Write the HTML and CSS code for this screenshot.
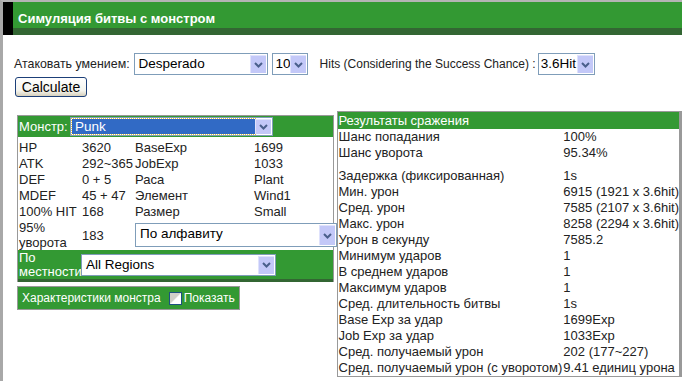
FILE: index.html
```html
<!DOCTYPE html>
<html lang="ru">
<head>
    <meta charset="UTF-8">
    <title>Симуляция битвы с монстром</title>
    <link rel="stylesheet" href="styles.css">
</head>
<body>
    <div class="frame">
        <div class="header">
            <div class="mark"></div>
            <h1>Симуляция битвы с монстром</h1>
        </div>

        <div class="controls">
            <div class="line">
                <span class="lbl">Атаковать умением:</span>
                <span class="sel skill"><span class="val">Desperado</span><span class="arr"><svg width="9" height="6" viewBox="0 0 9 6"><path d="M1 1 L4.5 4.5 L8 1" fill="none" stroke="#4a5f8c" stroke-width="2"/></svg></span></span>
                <span class="sel lv"><span class="val">10</span><span class="arr"><svg width="9" height="6" viewBox="0 0 9 6"><path d="M1 1 L4.5 4.5 L8 1" fill="none" stroke="#4a5f8c" stroke-width="2"/></svg></span></span>
                <span class="lbl hits">Hits (Considering the Success Chance) :</span>
                <span class="sel hit"><span class="val">3.6Hit</span><span class="arr"><svg width="9" height="6" viewBox="0 0 9 6"><path d="M1 1 L4.5 4.5 L8 1" fill="none" stroke="#4a5f8c" stroke-width="2"/></svg></span></span>
            </div>
            <button class="calc">Calculate</button>
        </div>

        <div class="panels">
            <div class="left">
                <div class="monster">
                    <div class="mon-head">
                        <span>Монстр:</span>
                        <span class="sel mon focused"><span class="val">Punk</span><span class="arr"><svg width="9" height="6" viewBox="0 0 9 6"><path d="M1 1 L4.5 4.5 L8 1" fill="none" stroke="#4a5f8c" stroke-width="2"/></svg></span></span>
                    </div>
                    <table class="stats">
                        <tr><td class="c1">HP</td><td class="c2">3620</td><td class="c3">BaseExp</td><td>1699</td></tr>
                        <tr><td>ATK</td><td>292~365</td><td>JobExp</td><td>1033</td></tr>
                        <tr><td>DEF</td><td>0 + 5</td><td>Раса</td><td>Plant</td></tr>
                        <tr><td>MDEF</td><td>45 + 47</td><td>Элемент</td><td>Wind1</td></tr>
                        <tr><td>100% HIT</td><td>168</td><td>Размер</td><td>Small</td></tr>
                        <tr class="flee">
                            <td>95%<br>уворота</td>
                            <td>183</td>
                            <td colspan="2"><span class="sel sort"><span class="val">По алфавиту</span><span class="arr"><svg width="9" height="6" viewBox="0 0 9 6"><path d="M1 1 L4.5 4.5 L8 1" fill="none" stroke="#4a5f8c" stroke-width="2"/></svg></span></span></td>
                        </tr>
                    </table>
                    <div class="region">
                        <span class="region-lbl">По<br>местности</span>
                        <span class="sel reg"><span class="val">All Regions</span><span class="arr"><svg width="9" height="6" viewBox="0 0 9 6"><path d="M1 1 L4.5 4.5 L8 1" fill="none" stroke="#4a5f8c" stroke-width="2"/></svg></span></span>
                    </div>
                </div>
                <div class="toggle">
                    <span>Характеристики монстра</span>
                    <span class="check"></span>
                    <span>Показать</span>
                </div>
            </div>

            <div class="results">
                <div class="res-head">Результаты сражения</div>
                <table class="res">
                    <tr><td class="k">Шанс попадания</td><td>100%</td></tr>
                    <tr><td>Шанс уворота</td><td>95.34%</td></tr>
                    <tr class="gap"><td colspan="2"></td></tr>
                    <tr><td>Задержка (фиксированная)</td><td>1s</td></tr>
                    <tr><td>Мин. урон</td><td>6915 (1921 x 3.6hit)</td></tr>
                    <tr><td>Сред. урон</td><td>7585 (2107 x 3.6hit)</td></tr>
                    <tr><td>Макс. урон</td><td>8258 (2294 x 3.6hit)</td></tr>
                    <tr><td>Урон в секунду</td><td>7585.2</td></tr>
                    <tr><td>Минимум ударов</td><td>1</td></tr>
                    <tr><td>В среднем ударов</td><td>1</td></tr>
                    <tr><td>Максимум ударов</td><td>1</td></tr>
                    <tr><td>Сред. длительность битвы</td><td>1s</td></tr>
                    <tr><td>Base Exp за удар</td><td>1699Exp</td></tr>
                    <tr><td>Job Exp за удар</td><td>1033Exp</td></tr>
                    <tr><td>Сред. получаемый урон</td><td>202 (177~227)</td></tr>
                    <tr><td>Сред. получаемый урон (с уворотом)</td><td>9.41 единиц урона</td></tr>
                </table>
            </div>
        </div>
    </div>
</body>
</html>
```

FILE: styles.css
```css
html, body {
    margin: 0;
    padding: 0;
    background: white;
}

body {
    font-family: "Liberation Sans", Arial, sans-serif;
    font-size: 13px;
    color: #222;
}

.frame {
    border-left: 3px solid #a8a8a8;
    border-top: 2px solid #b4b4b4;
    height: 379px;
    overflow: hidden;
}

.header {
    display: flex;
    height: 33px;
}

.mark {
    width: 10px;
    background: black;
}

.header h1 {
    flex: 1;
    margin: 0;
    height: 19px;
    padding: 7px 0 0 5px;
    line-height: 19px;
    background: #339933;
    border-bottom: 7px solid #336633;
    color: white;
    font-size: 13px;
    font-weight: bold;
}

.controls {
    padding: 18px 0 0 11px;
}

.line {
    display: flex;
    align-items: center;
    height: 22px;
}

.lbl {
    font-size: 12.4px;
    margin-right: 4px;
}

.hits {
    font-size: 12px;
    margin-left: 12px;
    margin-right: 2px;
}

/* xp-like dropdowns */
.sel {
    display: inline-flex;
    align-items: stretch;
    box-sizing: border-box;
    height: 22px;
    border: 1px solid #7f9db9;
    background: white;
    color: black;
    font-size: 13.5px;
    padding: 1px;
}

.sel .val {
    flex: 1;
    padding-left: 3px;
    line-height: 18px;
    white-space: nowrap;
    overflow: hidden;
}

.sel .arr {
    width: 15px;
    flex: none;
    background: #c3c8f8;
    border-left: 1px solid #dfe2fc;
    border-top: 1px solid #dfe2fc;
    display: flex;
    align-items: center;
    justify-content: center;
}

.skill { width: 134px; }
.lv { width: 36px; margin-left: 4px; }
.lv .val { padding-left: 2px; }
.hit { width: 57px; }
.hit .val { padding-left: 1px; }

.calc {
    margin-top: 2px;
    margin-left: 1px;
    width: 72px;
    height: 20px;
    padding: 0;
    font-family: "Liberation Sans", Arial, sans-serif;
    font-size: 14px;
    color: black;
    border: 1px solid #1c3f78;
    border-radius: 3px;
    background: linear-gradient(#ffffff, #f4f4ee 70%, #d6d0bc);
}

.panels {
    display: flex;
    align-items: flex-start;
    margin-top: 14px;
}

.left {
    width: 321px;
    margin-left: 14px;
    margin-top: 4px;
}

.monster {
    border: 1px solid #999;
    border-bottom: none;
}

.mon-head {
    display: flex;
    align-items: center;
    height: 21px;
    background: #339933;
    color: white;
    padding-left: 1px;
    font-size: 13px;
}

.mon-head > span:first-child {
    width: 51px;
}

.mon {
    width: 203px;
    height: 19px;
}

.focused .val {
    background: #316ac5;
    color: white;
    outline: 1px dotted #e8c040;
    line-height: 15px;
}

.stats {
    border-collapse: collapse;
    table-layout: fixed;
    width: 100%;
    margin-top: 3px;
}

.stats td {
    padding: 0 0 0 1px;
    height: 16px;
    line-height: 16px;
    white-space: nowrap;
    overflow: visible;
}

.c1 { width: 62px; }
.c2 { width: 52px; }
.c3 { width: 118px; }

.flee td {
    line-height: 15px;
    height: 29px;
}

.sort {
    width: 202px;
    height: 24px;
}

.region {
    display: flex;
    align-items: center;
    height: 29px;
    background: #339933;
    border-bottom: 3px solid #336633;
    color: white;
    padding-left: 1px;
}

.region-lbl {
    width: 62px;
    line-height: 14px;
}

.reg {
    width: 195px;
}

.toggle {
    display: inline-flex;
    align-items: center;
    margin-top: 4px;
    height: 22px;
    padding: 0 4px 0 4px;
    background: #339933;
    border: 1px solid #999;
    color: white;
    font-size: 12px;
}

.check {
    width: 11px;
    height: 11px;
    margin: 0 2px 0 8px;
    border: 1px solid #1c5180;
    background: linear-gradient(135deg, #d0d0c8 45%, white 55%);
}

.results {
    flex: 1;
    margin-left: 3px;
    border: 1px solid #999;
    border-right-width: 3px;
}

.res-head {
    height: 17px;
    line-height: 17px;
    background: #339933;
    color: white;
    padding-left: 1px;
}

.res {
    border-collapse: collapse;
    width: 100%;
}

.res td {
    padding: 0 0 0 1px;
    height: 16px;
    line-height: 16px;
    white-space: nowrap;
}

.res .k {
    width: 218px;
}

.res .gap td {
    height: 7px;
}
```
